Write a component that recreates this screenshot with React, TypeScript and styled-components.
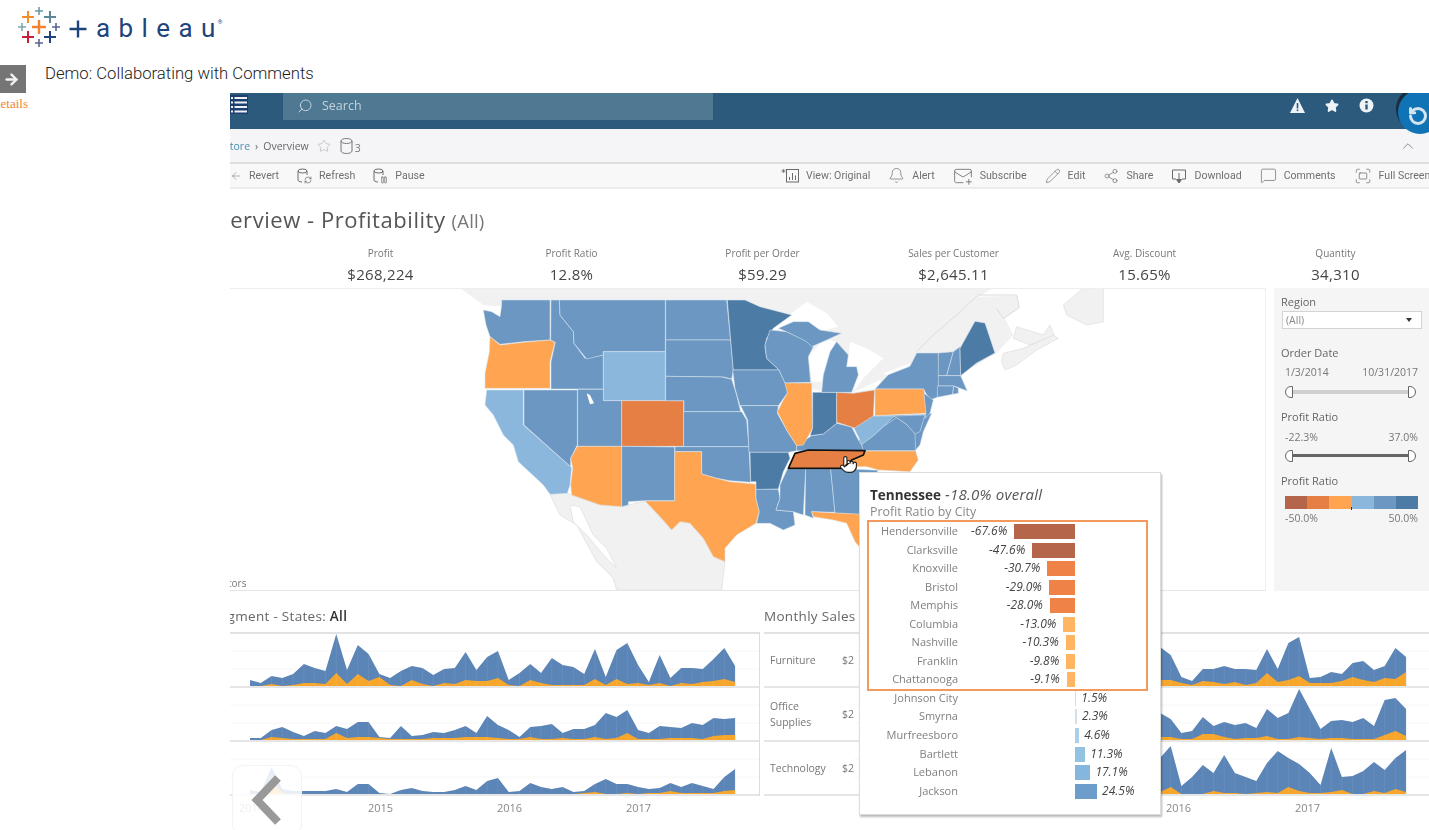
import React from "react";
import styled, { createGlobalStyle } from "styled-components";
import {
  ArrowLeft, ArrowRight, Search, Star, RefreshCw, Pause, Bell, MailPlus, Pencil,
  Share2, MessageSquare, Fullscreen, ChevronUp, RotateCcw, Pointer,
} from "lucide-react";

const Global = createGlobalStyle`
  html, body { margin: 0; padding: 0; background: #fff; }
  body { font-family: "Open Sans", "Liberation Sans", sans-serif; }
`;

const Page = styled.div`
  width: 1429px;
  height: 830px;
  overflow: hidden;
  background: #fff;
`;
const LogoBar = styled.header`
  height: 65px;
  display: flex;
  align-items: flex-start;
  padding: 5px 0 0 17px;
  box-sizing: border-box;
`;
const LogoWord = styled.span`
  font-family: Roboto, sans-serif;
  font-size: 26px;
  font-weight: 400;
  line-height: 46px;
  letter-spacing: 8.4px;
  color: #1f447d;
  margin-left: 7px;
`;
const LogoMark = styled.span`
  font-family: Roboto, sans-serif;
  font-size: 6px;
  line-height: 34px;
  color: #1f447d;
  margin-left: -6px;
`;
const DemoHead = styled.div`
  height: 28px;
  display: flex;
  align-items: flex-start;
  gap: 19px;
`;
const ArrowBox = styled.div`
  width: 26px;
  height: 28px;
  background: #757575;
  color: #f2f2f2;
  display: flex;
  align-items: center;
  padding-left: 3px;
  box-sizing: border-box;
`;
const DemoTitle = styled.h1`
  margin: 0;
  font-family: Roboto, sans-serif;
  font-size: 16.7px;
  font-weight: 300;
  line-height: 18px;
  color: #222;
`;
const Body = styled.div`
  display: flex;
  height: 737px;
`;
const Side = styled.aside`
  width: 230px;
  flex: none;
  overflow: hidden;
`;
const Details = styled.a`
  display: block;
  margin: 3px 0 0 -6px;
  font-family: "Liberation Serif", serif;
  font-size: 13px;
  line-height: 15px;
  color: #f5852a;
`;
const Video = styled.main`
  position: relative;
  width: 1199px;
  height: 737px;
  overflow: hidden;
  background: #fff;
  filter: blur(0.35px);
  color: #666;
`;
const TopBar = styled.div`
  height: 36px;
  background: #2b5a7d;
  display: flex;
  align-items: flex-start;
  color: #fff;
`;
const MenuIcon = styled.svg`
  width: 18px;
  height: 19px;
  margin-top: 2px;
  flex: none;
`;
const SearchBox = styled.div`
  margin-left: 35px;
  width: 430px;
  height: 27px;
  background: #4f7893;
  display: flex;
  align-items: center;
  gap: 9px;
  padding: 0 0 2px 14px;
  box-sizing: border-box;
  font-size: 12.5px;
  color: #c4d3dd;
`;
const TopIcons = styled.div`
  margin-left: auto;
  margin-right: 55px;
  display: flex;
  gap: 20px;
  height: 25px;
  align-items: center;
`;
const Circle = styled.div`
  position: absolute;
  left: 1168px;
  top: -3px;
  width: 44px;
  height: 44px;
  border-radius: 50%;
  background: #0f73b5;
  box-shadow: -2px -3px 0 #1b2b38;
  color: #d5e4ef;
  display: flex;
  align-items: center;
  padding: 8px 0 0 10px;
  box-sizing: border-box;
`;
const Crumbs = styled.div`
  height: 35px;
  background: #f5f5f7;
  border-bottom: 2px solid #dedede;
  box-sizing: border-box;
  display: flex;
  align-items: center;
  font-size: 10.5px;
  color: #666;
`;
const CrumbLink = styled.span`
  margin-left: -34px;
  color: #4b8fb0;
`;
const CrumbSep = styled.span`
  margin: 0 5px;
`;
const CrumbStar = styled.span`
  display: flex;
  margin-left: 8px;
  color: #aaa;
`;
const CrumbDb = styled.span`
  display: flex;
  align-items: flex-end;
  margin-left: 9px;
  gap: 2px;
  color: #777;
  line-height: 12px;
`;
const CrumbEnd = styled.span`
  display: flex;
  margin-left: auto;
  margin-right: 12px;
  color: #777;
`;
const Tools = styled.div`
  height: 25px;
  background: #f8f8f8;
  border-bottom: 2px solid #ececec;
  box-sizing: border-box;
  display: flex;
  align-items: center;
  white-space: nowrap;
`;
const ToolGroup = styled.div<{ $w?: number; $gap: number }>`
  display: flex;
  align-items: center;
  flex: none;
  width: ${(p) => (p.$w ? `${p.$w}px` : "auto")};
  gap: ${(p) => p.$gap}px;
`;
const Tool = styled.span`
  display: flex;
  align-items: center;
  gap: 7px;
  font-family: Roboto, sans-serif;
  font-size: 10.6px;
  color: #707070;
  flex: none;
  svg { flex: none; color: #6a6a6a; }
`;
const Heading = styled.div`
  height: 57px;
  padding-top: 19px;
  box-sizing: border-box;
  white-space: nowrap;
  font-size: 22px;
  line-height: 22px;
  letter-spacing: 0.55px;
  color: #555;
`;
const HeadingMain = styled.span`
  margin-left: -29px;
  display: inline-block;
`;
const HeadingAll = styled.span`
  font-size: 18.5px;
  color: #777;
  margin-left: 6px;
  letter-spacing: 0.2px;
`;
const Kpis = styled.div`
  height: 42px;
  display: grid;
  grid-template-columns: repeat(6, 191px);
  padding-left: 55px;
  text-align: center;
`;
const KpiLabel = styled.div`
  font-size: 10px;
  line-height: 14px;
  color: #777;
`;
const KpiValue = styled.div`
  font-size: 15px;
  letter-spacing: 0.3px;
  line-height: 18px;
  margin-top: 5px;
  color: #444;
`;
const Middle = styled.div`
  height: 303px;
  display: flex;
  gap: 8px;
`;
const MapBox = styled.div`
  position: relative;
  width: 1036px;
  height: 303px;
  flex: none;
  border-top: 1px solid #eee;
  border-bottom: 1px solid #e6e6e6;
  border-right: 1px solid #eee;
  box-sizing: border-box;
  svg { display: block; }
`;
const Attribution = styled.span`
  position: absolute;
  left: -2px;
  bottom: 0;
  font-size: 10px;
  line-height: 14px;
  color: #777;
`;
const Panel = styled.aside`
  flex: none;
  width: 155px;
  height: 303px;
  background: #f5f5f5;
  padding-top: 7px;
  box-sizing: border-box;
`;
const FilterTitle = styled.div<{ $mt?: number }>`
  margin: ${(p) => p.$mt ?? 0}px 0 0 7px;
  font-size: 11px;
  line-height: 14px;
  color: #666;
`;
const Select = styled.div`
  margin: 2px 0 0 8px;
  width: 140px;
  height: 18px;
  background: #fff;
  border: 1px solid #d4d4d4;
  box-sizing: border-box;
  display: flex;
  align-items: center;
  justify-content: space-between;
  padding: 0 9px 0 3px;
  font-size: 10.5px;
  color: #888;
`;
const Caret = styled.span`
  width: 0;
  height: 0;
  border-left: 3px solid transparent;
  border-right: 3px solid transparent;
  border-top: 4px solid #333;
`;
const RangeText = styled.div<{ $mt: number }>`
  margin: ${(p) => p.$mt}px 0 0;
  padding: 0 11px;
  display: flex;
  justify-content: space-between;
  font-size: 10.5px;
  line-height: 14px;
  color: #777;
`;
const Slider = styled.div<{ $mt: number; $dark?: boolean }>`
  position: relative;
  margin: ${(p) => p.$mt}px 15px 0;
  width: 123px;
  height: 12px;
  &::before {
    content: "";
    position: absolute;
    left: 0;
    right: 0;
    top: 4px;
    height: ${(p) => (p.$dark ? 3 : 4)}px;
    background: ${(p) => (p.$dark ? "#666" : "#cfcfcf")};
  }
`;
const Handle = styled.span<{ $end?: boolean }>`
  position: absolute;
  top: 0;
  ${(p) => (p.$end ? "right: -4px;" : "left: -4px;")}
  width: 8px;
  height: 12px;
  background: #fff;
  border: 1px solid #666;
  box-sizing: border-box;
  border-radius: ${(p) => (p.$end ? "0 6px 6px 0" : "6px 0 0 6px")};
`;
const Legend = styled.div`
  position: relative;
  margin: 8px 11px 0;
  height: 13px;
  display: flex;
`;
const Swatch = styled.span<{ $c: string }>`
  flex: 1;
  background: ${(p) => p.$c};
`;
const LegendTick = styled.span`
  position: absolute;
  left: 66px;
  bottom: -1px;
  width: 1px;
  height: 3px;
  background: #333;
`;
const Bottom = styled.div`
  display: flex;
  height: 239px;
`;
const LeftCharts = styled.section`
  width: 530px;
  flex: none;
  overflow: hidden;
`;
const RightCharts = styled.section`
  margin-left: 4px;
  flex: 1;
  min-width: 0;
  overflow: hidden;
`;
const SectionHead = styled.div`
  height: 42px;
  padding-top: 17px;
  box-sizing: border-box;
  white-space: nowrap;
  font-size: 13.5px;
  line-height: 16px;
  letter-spacing: 0.3px;
  color: #666;
  b { font-weight: 600; color: #333; }
`;
const SectionClip = styled.span`
  display: inline-block;
  margin-left: -18px;
`;
const ChartStack = styled.div<{ $side?: boolean }>`
  border-top: 2px solid #e2e2e2;
  margin-top: -1px;
  ${(p) => (p.$side ? "border-right: 1px solid #ddd;" : "")}
`;
const ChartRow = styled.div`
  height: 54px;
  border-bottom: 2px solid #e6e6e6;
  box-sizing: border-box;
  display: flex;
  svg { display: block; flex: none; }
`;
const RowLabel = styled.div`
  width: 72px;
  flex: none;
  margin-left: 6px;
  align-self: center;
  font-size: 10.5px;
  line-height: 16px;
  color: #777;
`;
const RowValue = styled.div`
  width: 18px;
  flex: none;
  align-self: center;
  font-size: 10.5px;
  color: #777;
`;
const RowChart = styled.div`
  margin-left: -6px;
`;
const Axis = styled.div<{ $pad: number }>`
  display: flex;
  padding-left: ${(p) => p.$pad}px;
  padding-top: 4px;
  font-size: 11px;
  line-height: 15px;
  color: #888;
`;
const Year = styled.span<{ $first?: boolean }>`
  width: 129px;
  flex: none;
  text-align: center;
  ${(p) => (p.$first ? "margin-left: -43px;" : "")}
`;
const Back = styled.div`
  position: absolute;
  left: 2px;
  top: 672px;
  width: 70px;
  height: 70px;
  border-radius: 11px;
  border: 1px solid #f3f3f3;
  box-sizing: border-box;
  background: rgba(255, 255, 255, 0.86);
  display: flex;
  align-items: flex-start;
  padding: 9px 0 0 18px;
`;
const Tooltip = styled.div`
  position: absolute;
  left: 629px;
  top: 379px;
  width: 302px;
  height: 343px;
  background: #fff;
  border: 1px solid #dcdcdc;
  box-shadow: 1px 2px 2px rgba(0, 0, 0, 0.28);
  box-sizing: border-box;
  padding-top: 13px;
`;
const TipTitle = styled.div`
  margin-left: 10px;
  font-size: 15px;
  line-height: 17px;
  font-style: italic;
  letter-spacing: 0.25px;
  color: #555;
  b { font-size: 13.5px; letter-spacing: 0; font-style: normal; font-weight: 700; color: #333; }
`;
const TipSub = styled.div`
  margin-left: 10px;
  font-size: 12.4px;
  line-height: 16px;
  color: #888;
`;
const Boxed = styled.div`
  width: 281px;
  margin-left: 7px;
  border: 2px solid #f29a5c;
  box-sizing: border-box;
`;
const CityRow = styled.div<{ $label: number }>`
  height: 18.55px;
  padding-bottom: 2px;
  box-sizing: border-box;
  display: grid;
  grid-template-columns: ${(p) => p.$label}px 117px 1fr;
  align-items: center;
  white-space: nowrap;
  font-size: 11px;
`;
const City = styled.span`
  text-align: right;
  color: #808080;
`;
const NegCell = styled.span`
  display: flex;
  justify-content: flex-end;
  align-items: center;
  gap: 7px;
`;
const PosCell = styled.span`
  display: flex;
  align-items: center;
  gap: 5px;
`;
const Pct = styled.i`
  color: #444;
  font-size: 12px;
`;
const Bar = styled.span<{ $c: string }>`
  height: 15px;
  margin-top: 2px;
  background: ${(p) => p.$c};
  flex: none;
`;
const Plain = styled.div`
  margin-top: -2px;
`;
const Hand = styled.span`
  position: absolute;
  left: 609px;
  top: 362px;
  display: flex;
  color: #222;
`;

const B = "#6b97c2", D = "#4c7ba6", L = "#8bb7dc", O = "#ffa552", R = "#e57f44";
const states: [string, string][] = [
  [B, "1270,392 1430,388 1445,385 1420,440 1410,480 1395,497 1240,497 1225,470"],
  [B, "100,75 125,80 150,95 155,60 155,45 300,45 300,165 220,170 150,178 120,155 108,120"],
  [O, "120,155 150,180 220,172 300,165 315,172 300,230 300,310 105,310 105,265 118,200"],
  [L, "110,315 220,315 220,420 365,548 360,600 352,625 300,628 280,600 205,530 190,480 160,450 130,390 105,360"],
  [B, "222,315 382,315 382,480 362,520 362,545 222,420"],
  [B, "303,45 328,45 330,90 370,140 372,175 405,220 460,210 460,312 303,312 303,230 316,172 302,165"],
  [B, "328,45 646,45 646,200 460,200 460,210 410,222 372,175 370,140 330,90"],
  [L, "460,200 646,200 646,347 460,347"],
  [B, "383,313 460,313 460,347 515,347 515,484 383,484"],
  [R, "515,347 701,347 701,484 515,484"],
  [O, "382,484 515,484 515,665 450,660 365,630 362,600 368,550 362,520"],
  [B, "515,484 674,486 674,647 580,647 535,650 535,660 515,665"],
  [B, "647,45 830,45 842,165 647,165"],
  [B, "647,165 842,165 850,255 845,282 820,276 647,274"],
  [B, "647,274 815,276 845,283 860,330 872,380 702,380 702,347 647,347"],
  [B, "701,380 875,380 890,405 897,485 701,485"],
  [B, "675,485 897,485 902,592 840,587 800,580 755,567 755,500 675,500"],
  [O, "675,500 754,500 755,567 800,580 840,590 917,597 918,640 928,680 918,715 860,750 825,790 825,830 790,815 760,760 720,715 690,710 665,735 630,695 585,648 674,648 674,500"],
  [D, "832,45 885,45 930,65 1025,90 970,130 950,160 945,185 950,220 987,255 850,255 842,165"],
  [B, "848,255 987,255 1005,293 1015,320 985,362 870,362 855,310"],
  [B, "960,135 1010,140 1075,170 1090,185 1075,215 1082,292 1005,294 987,255 950,220 945,180"],
  [B, "872,362 985,362 982,385 1010,435 1040,482 1040,497 1015,502 897,502 893,405"],
  [D, "900,502 1015,502 1020,520 1000,560 985,612 918,614 918,590 902,590"],
  [B, "918,613 985,613 990,640 978,675 1030,680 1035,720 1000,735 960,715 920,715 928,680 918,640"],
  [B, "1040,497 1040,482 1085,452 1120,447 1160,415 1205,426 1228,470 1245,497"],
  [O, "1005,294 1085,294 1088,430 1060,480 1040,482 1010,435 982,380 1000,345 1012,325"],
  [D, "1088,322 1160,322 1160,415 1120,447 1080,452 1088,430"],
  [R, "1160,322 1210,325 1274,315 1270,395 1225,435 1205,426 1160,412"],
  [B, "1140,200 1160,170 1195,210 1190,245 1220,245 1225,270 1205,322 1115,322 1120,270"],
  [B, "985,130 1030,110 1075,110 1110,135 1175,145 1130,165 1085,185 1070,170 1010,140"],
  [B, "1235,478 1270,452 1300,425 1340,398 1370,418 1395,445 1397,497 1240,497"],
  [L, "1212,430 1270,393 1332,393 1305,420 1270,452 1235,478 1225,455"],
  [B, "1332,393 1425,390 1410,440 1395,447 1370,418 1340,398"],
  [O, "1240,498 1397,498 1405,525 1380,560 1285,555 1250,545 1205,545 1205,525"],
  [B, "1012,552 1067,552 1060,690 1030,680 978,675 990,640 990,600"],
  [B, "1067,552 1142,552 1155,682 1085,680 1090,700 1065,690"],
  [B, "1142,552 1205,552 1285,556 1260,590 1240,690 1155,685"],
  [O, "1085,680 1240,688 1240,800 1215,770 1190,715 1150,705 1090,695"],
  [B, "1275,312 1315,269 1380,244 1400,204 1465,204 1468,290 1462,337 1440,345 1420,312"],
  [O, "1275,312 1422,312 1430,385 1275,392"],
  [B, "1422,325 1450,345 1440,385 1425,400 1428,385"],
  [B, "1465,204 1510,200 1490,272 1465,272"],
  [B, "1510,200 1530,185 1532,272 1490,272"],
  [B, "1465,272 1532,272 1552,318 1512,303 1465,303"],
  [B, "1462,303 1511,303 1508,328 1462,337"],
  [B, "1511,303 1525,310 1525,325 1508,328"],
  [D, "1575,109 1605,114 1635,204 1580,234 1532,272 1530,190"],
];

const USMap = () => (
  <svg width={1035} height={301} viewBox="230 289 1035 301">
    <g transform="translate(450 285) scale(0.33333)">
      <polygon
        fill="#f1f1f1"
        points="30,9 1630,9 1585,35 1700,32 1708,68 1665,100 1690,150 1640,205 1530,269 1200,330 1000,300 900,120 100,60"
      />
      <polygon fill="#f1f1f1" stroke="#dcdcdc" strokeWidth={2} points="1655,230 1660,205 1720,190 1810,150 1825,160 1760,195 1700,240 1665,255" />
      <polygon fill="#f1f1f1" stroke="#dcdcdc" strokeWidth={2} points="1700,125 1780,150 1800,120 1812,150 1740,180 1690,160" />
      <polygon fill="#f1f1f1" stroke="#dcdcdc" strokeWidth={2} points="1840,60 1900,10 1960,10 1960,110 1910,120 1850,90" />
      <polyline fill="none" stroke="#dcdcdc" strokeWidth={3} points="1400,200 1450,150 1520,90 1585,30 1700,30 1708,68 1660,100 1640,70" />
      <polygon fill="#fff" points="965,135 1000,105 1070,50 1130,85 1165,125 1110,140 1040,130" />
      <polygon fill="#fff" points="1085,290 1075,215 1110,175 1140,165 1155,170 1130,230 1115,290" />
      <polygon fill="#fff" points="1195,215 1200,170 1250,190 1300,220 1240,280 1210,320 1225,260 1190,245" />
      <polygon fill="#fff" points="1210,322 1290,285 1300,300 1275,312" />
      <polygon fill="#fff" points="1300,265 1380,235 1370,255 1320,275" />
      <polygon
        fill="#f1f1f1"
        stroke="#dcdcdc"
        strokeWidth={2}
        points="300,628 350,625 450,660 517,665 585,648 665,735 690,710 720,715 760,760 790,815 825,830 815,915 500,915 490,880 440,830 380,720 330,690"
      />
      <polygon fill="#fff" stroke="#dcdcdc" strokeWidth={2} points="360,660 390,665 430,750 470,790 500,850 460,810 415,755 370,710" />
      {states.map(([fill, pts], i) => (
        <polygon key={i} fill={fill} stroke="#dbe6f0" strokeWidth={1.6} points={pts} />
      ))}
      <polygon fill="#fff" points="410,325 420,330 432,355 420,358" />
      <polygon
        fill={R}
        stroke="#111"
        strokeWidth={5}
        strokeLinejoin="round"
        points="1035,505 1075,495 1245,497 1240,510 1205,525 1180,550 1015,550"
      />
    </g>
  </svg>
);

const buildArea = (start: number, step: number, vals: number[], base: number) =>
  vals.map((v, i) => `${start + i * step},${base - v}`).join(" ") +
  ` ${start + (vals.length - 1) * step},${base} ${start},${base}`;

const Area = ({ w, start, step, tops, lows }: { w: number; start: number; step: number; tops: number[]; lows: number[] }) => (
  <svg width={w} height={52} viewBox={`0 0 ${w} 52`}>
    <line x1={0} x2={w} y1={17} y2={17} stroke="#f6f6f6" />
    <line x1={0} x2={w} y1={35} y2={35} stroke="#f6f6f6" />
    <polygon fill="#5b84b7" points={buildArea(start, step, tops, 52)} />
    <polygon fill="#f7a62c" points={buildArea(start, step, lows, 52)} />
    {tops.map((v, i) => (
      <line
        key={i}
        x1={start + i * step}
        x2={start + i * step}
        y1={52 - v}
        y2={52}
        stroke="rgba(255,255,255,0.08)"
      />
    ))}
  </svg>
);

const left = [
  {
    t: [6,3,10,8,12,22,18,15,52,16,41,32,12,8,15,20,18,11,17,18,34,16,29,35,6,13,22,13,28,21,19,12,37,9,36,43,21,4,31,8,18,18,17,27,38,20],
    o: [0,0,2,0,1,3,3,2,13,2,12,5,9,1,0,6,2,0,3,2,6,5,5,8,1,0,6,3,1,1,1,1,7,1,7,2,3,1,3,0,3,2,4,5,7,4],
  },
  {
    t: [2,2,10,13,8,4,9,7,14,11,18,18,3,2,14,4,5,8,7,10,14,7,24,15,10,3,13,14,16,7,11,11,15,27,23,30,10,7,14,13,12,17,15,22,21,22],
    o: [0,0,3,2,1,1,1,1,7,2,3,3,2,1,1,1,1,2,2,2,3,3,3,2,1,1,3,1,1,2,1,1,3,1,2,7,1,1,1,2,2,2,1,4,5,5],
  },
  {
    t: [4,2,27,5,3,3,3,3,5,2,10,10,1,0,4,6,3,2,2,4,8,4,13,16,2,3,11,7,5,7,2,3,10,15,10,10,7,5,6,11,7,11,8,5,17,25],
    o: [0,0,13,1,0,0,0,0,0,0,0,0,0,0,0,0,0,0,0,0,0,0,0,0,0,0,0,0,0,0,0,1,2,0,0,1,0,1,1,3,1,1,1,1,3,4],
  },
];
const right = [
  {
    label: "Furniture",
    t: [39,31,9,5,17,17,20,17,17,16,37,17,43,49,8,9,14,12,23,25,16,20,38,29],
    o: [6,6,3,1,5,4,2,4,1,3,13,4,6,10,3,3,3,5,9,6,4,8,7,14],
  },
  {
    label: "Office Supplies",
    t: [27,21,7,9,23,14,18,15,17,12,31,22,27,51,31,11,19,20,18,22,14,40,42,31],
    o: [3,3,1,1,6,6,3,1,2,2,4,1,1,3,2,1,2,2,1,1,1,5,9,4],
  },
  {
    label: "Technology",
    t: [36,48,8,17,29,21,39,21,17,13,31,43,36,30,21,9,46,17,18,23,32,24,36,44],
    o: [2,7,0,0,0,3,1,1,0,1,2,1,7,3,1,1,2,4,0,0,3,1,5,2],
  },
];

const cities: [string, number][] = [
  ["Hendersonville", -67.6], ["Clarksville", -47.6], ["Knoxville", -30.7], ["Bristol", -29.0], ["Memphis", -28.0],
  ["Columbia", -13.0], ["Nashville", -10.3], ["Franklin", -9.8], ["Chattanooga", -9.1],
  ["Johnson City", 1.5], ["Smyrna", 2.3], ["Murfreesboro", 4.6], ["Bartlett", 11.3], ["Lebanon", 17.1], ["Jackson", 24.5],
];
const barColor = (v: number) => {
  if (v < -40) return "#b5654a";
  if (v < -20) return "#ee8247";
  if (v < 0) return "#ffb562";
  if (v < 3) return "#d3deea";
  if (v < 6) return "#a9cfea";
  if (v < 12) return "#93c3e3";
  if (v < 20) return "#85b6dd";
  return "#6d9ecb";
};
const CityLine = ({ name, v, label }: { name: string; v: number; label: number }) => {
  const text = `${v.toFixed(1)}%`;
  const bar = <Bar $c={barColor(v)} style={{ width: Math.abs(v) * 0.9 }} />;
  return (
    <CityRow $label={label}>
      <City>{name}</City>
      <NegCell>{v < 0 && <><Pct>{text}</Pct>{bar}</>}</NegCell>
      <PosCell>{v > 0 && <>{bar}<Pct>{text}</Pct></>}</PosCell>
    </CityRow>
  );
};

const logoMarks: [number, number, number, string, number][] = [
  [28, 17, 6, "#f28e2b", 2],
  [39, 11, 4, "#6b9aa8", 1.6],
  [50, 17, 6, "#5b879b", 2],
  [22, 27, 4, "#7ba7b0", 1.6],
  [39, 27, 7, "#f28232", 2.4],
  [56, 27, 4, "#5b6591", 1.6],
  [28, 37, 6, "#c72037", 2],
  [39, 43, 4, "#5b6591", 1.6],
  [50, 37, 6, "#1f447d", 2],
  [78, 29, 8.5, "#1f447d", 2.4],
];
const Logo = () => (
  <svg width={72} height={44} viewBox="17 5 72 44">
    {logoMarks.map(([x, y, r, c, s], i) => (
      <path key={i} d={`M${x - r} ${y}H${x + r}M${x} ${y - r}V${y + r}`} stroke={c} strokeWidth={s} fill="none" />
    ))}
  </svg>
);

const DbAction = ({ Badge }: { Badge: typeof Pause }) => (
  <svg width={16} height={16} viewBox="0 0 16 16" fill="none" stroke="currentColor" strokeWidth={1}>
    <ellipse cx={6.5} cy={3} rx={4.5} ry={2} />
    <path d="M2 3v9c0 1 1.500 1.800 4 2M11 3v4" />
    <Badge x={8} y={8} width={8} height={8} strokeWidth={2} />
  </svg>
);

const Cylinder = () => (
  <svg width={13} height={16} viewBox="0 0 13 16" fill="none" stroke="currentColor" strokeWidth={1}>
    <ellipse cx={6.500} cy={3} rx={5.500} ry={2.500} />
    <path d="M1 3v10c0 1.400 2.500 2.500 5.500 2.500s5.500-1.100 5.500-2.500V3" />
  </svg>
);

const DownloadTray = () => (
  <svg width={16} height={16} viewBox="0 0 16 16" fill="none" stroke="currentColor" strokeWidth={1}>
    <path d="M5 11H1.500V2h13v9H11" />
    <path d="M8 5v8" />
    <path d="M5.500 11.500 8 15l2.500-3.500z" fill="currentColor" />
  </svg>
);

const ViewIcon = () => (
  <svg width={18} height={15} viewBox="0 0 18 15" fill="none" stroke="currentColor" strokeWidth={1}>
    <path d="M2.500 1v4M.5 3h4M1 1.500l3 3M4 1.500l-3 3" strokeWidth={0.7} />
    <rect x={5.500} y={1.500} width={12} height={12.500} />
    <path d="M8.500 12V9M11.500 12V5M14.500 12V7.500" />
  </svg>
);

export default function App() {
  return (
    <Page>
      <Global />
      <LogoBar>
        <Logo />
        <LogoWord>ableau</LogoWord>
        <LogoMark>®</LogoMark>
      </LogoBar>
      <DemoHead>
        <ArrowBox><ArrowRight size={17} strokeWidth={3.4} /></ArrowBox>
        <DemoTitle>Demo: Collaborating with Comments</DemoTitle>
      </DemoHead>
      <Body>
        <Side>
          <Details>details</Details>
        </Side>
        <Video>
          <TopBar>
            <MenuIcon viewBox="0 0 18 19">
              <rect width={18} height={19} fill="#1d3f6e" />
              {[2, 6.500, 11, 15.500].map((y) => (
                <g key={y} fill="#eef2f6">
                  <rect x={1} y={y} width={2} height={2} />
                  <rect x={4.500} y={y} width={12.500} height={2} />
                </g>
              ))}
            </MenuIcon>
            <SearchBox>
              <Search size={16} strokeWidth={1.5} style={{ transform: "scaleX(-1)" }} />
              Search
            </SearchBox>
            <TopIcons>
              <svg width={15} height={15} viewBox="0 0 15 15">
                <path d="M7.500 0 15 15H0z" fill="#eef3f7" />
                <rect x={6.700} y={5} width={1.600} height={5.500} fill="#2b5a7d" />
                <rect x={6.700} y={11.500} width={1.600} height={1.600} fill="#2b5a7d" />
              </svg>
              <Star size={14} fill="#eef3f7" color="#eef3f7" />
              <svg width={15} height={15} viewBox="0 0 15 15">
                <circle cx={7.500} cy={7.500} r={7} fill="#eef3f7" />
                <rect x={6.300} y={6.500} width={2.400} height={5} fill="#2b5a7d" />
                <rect x={6.300} y={3} width={2.400} height={2.200} fill="#2b5a7d" />
              </svg>
            </TopIcons>
          </TopBar>
          <Circle><RotateCcw size={20} strokeWidth={3.6} /></Circle>
          <Crumbs>
            <CrumbLink>Superstore</CrumbLink>
            <CrumbSep>›</CrumbSep>
            Overview
            <CrumbStar><Star size={14} strokeWidth={1} /></CrumbStar>
            <CrumbDb><Cylinder />3</CrumbDb>
            <CrumbEnd><ChevronUp size={18} strokeWidth={1.1} /></CrumbEnd>
          </Crumbs>
          <Tools>
            <ToolGroup $w={551} $gap={17}>
              <Tool><ArrowLeft size={12} strokeWidth={1} />Revert</Tool>
              <Tool><DbAction Badge={RefreshCw} />Refresh</Tool>
              <Tool><DbAction Badge={Pause} />Pause</Tool>
            </ToolGroup>
            <ToolGroup $gap={18}>
              <Tool><ViewIcon />View: Original</Tool>
              <Tool><Bell size={17} strokeWidth={1} />Alert</Tool>
              <Tool><MailPlus size={20} strokeWidth={1} />Subscribe</Tool>
              <Tool><Pencil size={16} strokeWidth={1} />Edit</Tool>
              <Tool><Share2 size={16} strokeWidth={1} />Share</Tool>
              <Tool><DownloadTray />Download</Tool>
              <Tool><MessageSquare size={17} strokeWidth={1} />Comments</Tool>
              <Tool><Fullscreen size={18} strokeWidth={1} />Full Screen</Tool>
            </ToolGroup>
          </Tools>
          <Heading>
            <HeadingMain>Overview - Profitability</HeadingMain>
            <HeadingAll>(All)</HeadingAll>
          </Heading>
          <Kpis>
            {[
              ["Profit", "$268,224"], ["Profit Ratio", "12.8%"], ["Profit per Order", "$59.29"],
              ["Sales per Customer", "$2,645.11"], ["Avg. Discount", "15.65%"], ["Quantity", "34,310"],
            ].map(([k, v]) => (
              <div key={k}>
                <KpiLabel>{k}</KpiLabel>
                <KpiValue>{v}</KpiValue>
              </div>
            ))}
          </Kpis>
          <Middle>
            <MapBox>
              <USMap />
              <Attribution>tors</Attribution>
            </MapBox>
            <Panel>
              <FilterTitle>Region</FilterTitle>
              <Select>(All)<Caret /></Select>
              <FilterTitle $mt={17}>Order Date</FilterTitle>
              <RangeText $mt={5}><span>1/3/2014</span><span>10/31/2017</span></RangeText>
              <Slider $mt={7}><Handle /><Handle $end /></Slider>
              <FilterTitle $mt={12}>Profit Ratio</FilterTitle>
              <RangeText $mt={6}><span>-22.3%</span><span>37.0%</span></RangeText>
              <Slider $mt={6} $dark><Handle /><Handle $end /></Slider>
              <FilterTitle $mt={12}>Profit Ratio</FilterTitle>
              <Legend>
                {["#b5654a", "#e57f44", "#ffa552", "#8bb7dc", "#6b97c2", "#4c7ba6"].map((c) => (
                  <Swatch key={c} $c={c} />
                ))}
                <LegendTick />
              </Legend>
              <RangeText $mt={2}><span>-50.0%</span><span>50.0%</span></RangeText>
            </Panel>
          </Middle>
          <Bottom>
            <LeftCharts>
              <SectionHead>
                <SectionClip>Segment - States: <b>All</b></SectionClip>
              </SectionHead>
              <ChartStack $side>
                {left.map((r, i) => (
                  <ChartRow key={i}>
                    <Area w={529} start={20} step={10.78} tops={r.t} lows={r.o} />
                  </ChartRow>
                ))}
              </ChartStack>
              <Axis $pad={0}>
                <Year $first>2014</Year>
                <Year>2015</Year>
                <Year>2016</Year>
                <Year>2017</Year>
              </Axis>
            </LeftCharts>
            <RightCharts>
              <SectionHead>Monthly Sales</SectionHead>
              <ChartStack>
                {right.map((r) => (
                  <ChartRow key={r.label}>
                    <RowLabel>{r.label}</RowLabel>
                    <RowValue>$2</RowValue>
                    <RowChart>
                      <Area w={576} start={306} step={10.7} tops={r.t} lows={r.o} />
                    </RowChart>
                  </ChartRow>
                ))}
              </ChartStack>
              <Axis $pad={350}>
                <Year>2016</Year>
                <Year>2017</Year>
              </Axis>
            </RightCharts>
          </Bottom>
          <Back>
            <svg width={32} height={50} viewBox="0 0 32 50">
              <polyline points="27,3 6,25 27,47" fill="none" stroke="#999" strokeWidth={8} />
            </svg>
          </Back>
          <Hand><Pointer size={19} fill="#fff" strokeWidth={1.4} /></Hand>
          <Tooltip>
            <TipTitle><b>Tennessee</b> -18.0% overall</TipTitle>
            <TipSub>Profit Ratio by City</TipSub>
            <Boxed>
              {cities.slice(0, 9).map(([n, v]) => (
                <CityLine key={n} name={n} v={v} label={89} />
              ))}
            </Boxed>
            <Plain>
              {cities.slice(9).map(([n, v]) => (
                <CityLine key={n} name={n} v={v} label={98} />
              ))}
            </Plain>
          </Tooltip>
        </Video>
      </Body>
    </Page>
  );
}
